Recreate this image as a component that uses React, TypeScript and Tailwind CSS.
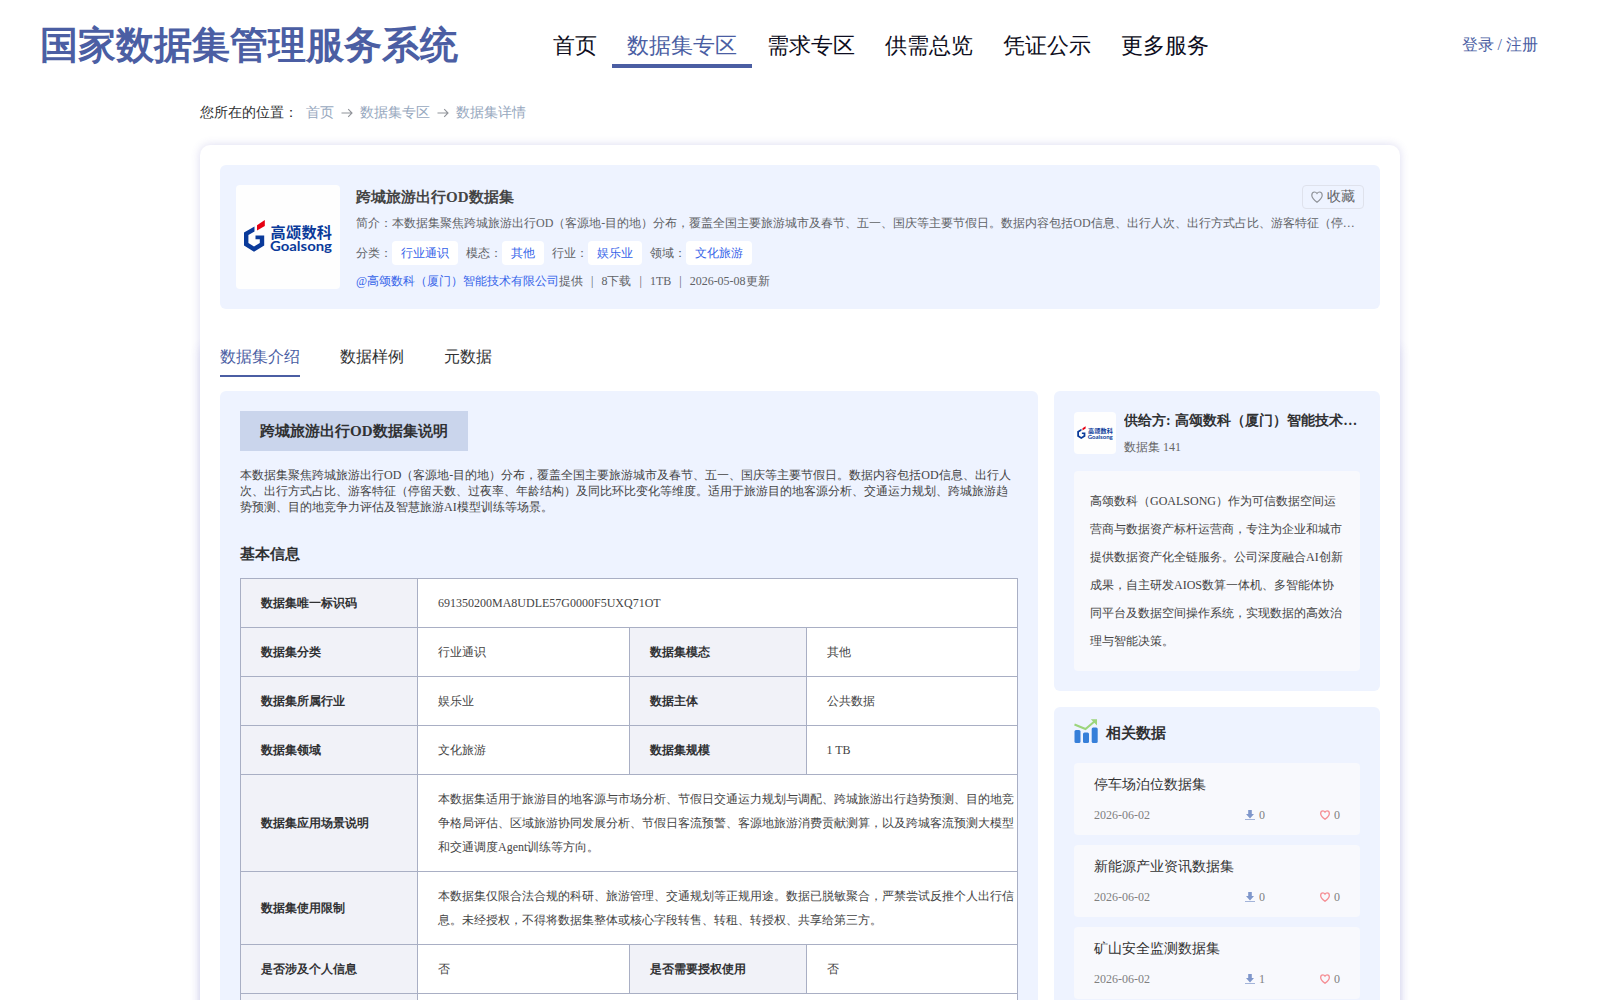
import React from 'react';

const navItems = ['首页', '数据集专区', '需求专区', '供需总览', '凭证公示', '更多服务'];

const summary =
  '本数据集聚焦跨城旅游出行OD（客源地-目的地）分布，覆盖全国主要旅游城市及春节、五一、国庆等主要节假日。数据内容包括OD信息、出行人次、出行方式占比、游客特征（停留天数、过夜率、年龄结构）及同比环比变化等维度。适用于旅游目的地客源分析、交通运力规划、跨城旅游趋势预测、目的地竞争力评估及智慧旅游AI模型训练等场景。';

const tags = [
  { label: '分类：', value: '行业通识' },
  { label: '模态：', value: '其他' },
  { label: '行业：', value: '娱乐业' },
  { label: '领域：', value: '文化旅游' },
];

const rows = [
  ['数据集唯一标识码', '691350200MA8UDLE57G0000F5UXQ71OT'],
  ['数据集分类', '行业通识', '数据集模态', '其他'],
  ['数据集所属行业', '娱乐业', '数据主体', '公共数据'],
  ['数据集领域', '文化旅游', '数据集规模', '1 TB'],
  [
    '数据集应用场景说明',
    '本数据集适用于旅游目的地客源与市场分析、节假日交通运力规划与调配、跨城旅游出行趋势预测、目的地竞争格局评估、区域旅游协同发展分析、节假日客流预警、客源地旅游消费贡献测算，以及跨城客流预测大模型和交通调度Agent训练等方向。',
  ],
  [
    '数据集使用限制',
    '本数据集仅限合法合规的科研、旅游管理、交通规划等正规用途。数据已脱敏聚合，严禁尝试反推个人出行信息。未经授权，不得将数据集整体或核心字段转售、转租、转授权、共享给第三方。',
  ],
  ['是否涉及个人信息', '否', '是否需要授权使用', '否'],
  ['', ''],
];

const related = [
  { title: '停车场泊位数据集', date: '2026-06-02', downloads: 0, likes: 0 },
  { title: '新能源产业资讯数据集', date: '2026-06-02', downloads: 0, likes: 0 },
  { title: '矿山安全监测数据集', date: '2026-06-02', downloads: 1, likes: 0 },
];

const Logo = ({ className }: { className: string }) => (
  <svg viewBox="0 0 104 104" className={className}>
    <rect width="104" height="104" fill="#fefefe" />
    <path d="M18.5 41.5 L8 47.5 V60.5 L18 66.8 L28.2 60.5 V50.5 H19.5 V54.3 H23.8 V58 L18 61.6 L12.4 58 V50 L18.5 46.4 Z" fill="#0a3a9a" />
    <path d="M21 40.2 L28.8 35 V41 L21 45.6 Z" fill="#e60012" />
    <text x="34.5" y="53" fontSize="15.2" fontWeight="700" textLength="61.5" fill="#0a3a9a" fontFamily="'Noto Sans CJK SC', sans-serif">高颂数科</text>
    <text x="34" y="65.8" fontSize="13.4" fontWeight="700" textLength="62" lengthAdjust="spacingAndGlyphs" fill="#0a3a9a" fontFamily="Lato, sans-serif">Goalsong</text>
  </svg>
);

const HeartIcon = ({ className }: { className: string }) => (
  <svg viewBox="0 0 12 12" className={className} fill="none" stroke="currentColor">
    <path d="M6 11.2 C3 9 0.8 7 0.8 4.2 C0.8 2.3 2 1 3.5 1 C4.6 1 5.4 1.6 6 2.5 C6.6 1.6 7.4 1 8.5 1 C10 1 11.2 2.3 11.2 4.2 C11.2 7 9 9 6 11.2 Z" />
  </svg>
);

const DownloadIcon = () => (
  <svg viewBox="0 0 10 10" className="w-2.5 h-2.5">
    <path d="M3.2 0 H6.8 V4 H9 L5 8.4 L1 4 H3.2 Z" fill="#7f97cb" />
    <rect y="9" width="10" height="1" fill="#a3b4d9" />
  </svg>
);

const ArrowIcon = () => (
  <svg viewBox="0 0 14 14" className="w-3.5 h-3.5 mx-1.5" fill="none" stroke="#909399" strokeWidth="1.1">
    <path d="M1.5 7 H12 M8.2 3.2 L12 7 L8.2 10.8" />
  </svg>
);

const ChartIcon = () => (
  <svg viewBox="0 0 24 24" className="w-6 h-6">
    <rect x="0.5" y="11" width="6" height="13" rx="1.5" fill="#367fd9" />
    <rect x="9" y="13.5" width="6" height="10.5" rx="1.5" fill="#367fd9" />
    <rect x="17.7" y="8.5" width="6" height="15.5" rx="1.5" fill="#367fd9" />
    <path d="M0.5 5.5 L11.5 10 L21 2" fill="none" stroke="#9cd57c" strokeWidth="2" />
    <path d="M16.8 0.3 H23 V6.5 Z" fill="#9cd57c" />
  </svg>
);

const Header = () => (
  <header className="flex items-center h-[90px] pl-10 pr-[62px] text-[#4b5ea3]">
    <h1 className="text-[38px] leading-[44px] font-bold w-[498px]">国家数据集管理服务系统</h1>
    <nav className="flex text-[22px] leading-[30px]">
      {navItems.map((item) => (
        <a
          key={item}
          className={
            item === '数据集专区'
              ? 'px-[15px] pt-2 pb-[3px] border-b-4 border-[#4b5ea3]'
              : 'px-[15px] pt-2 pb-[3px] border-b-4 border-transparent text-[#0d0d20]'
          }
        >
          {item}
        </a>
      ))}
    </nav>
    <a className="ml-auto text-base">登录 / 注册</a>
  </header>
);

const Summary = () => (
  <section className="flex h-36 rounded-md bg-[#eef3ff] px-4 py-5">
    <Logo className="w-[104px] h-[104px] rounded shrink-0" />
    <div className="ml-4 flex-1 min-w-0 text-xs text-[#606266]">
      <div className="flex justify-between h-6">
        <h2 className="text-[15px] leading-6 font-bold text-[#444]">跨城旅游出行OD数据集</h2>
        <button className="flex items-center gap-1 h-6 px-2 border border-[#dfe2ec] rounded text-sm leading-5">
          <HeartIcon className="w-3 h-3 stroke-[1.2] text-[#909399]" />
          收藏
        </button>
      </div>
      <p className="mt-1 h-5 leading-5 truncate pr-2">简介：{summary}</p>
      <div className="flex gap-2 mt-2 leading-6">
        {tags.map((tag) => (
          <div key={tag.label} className="flex">
            {tag.label}
            <span className="px-[9px] rounded bg-white text-[#3563e9]">{tag.value}</span>
          </div>
        ))}
      </div>
      <div className="flex gap-2 mt-2 leading-4">
        <span>
          <a className="text-[#3563e9]">@高颂数科（厦门）智能技术有限公司</a>提供
        </span>
        <span>|</span>
        <span>8下载</span>
        <span>|</span>
        <span>1TB</span>
        <span>|</span>
        <span>2026-05-08更新</span>
      </div>
    </div>
  </section>
);

const InfoTable = () => (
  <table className="w-[778px] table-fixed border-collapse text-xs leading-6 bg-white">
    <colgroup>
      <col className="w-[177px]" />
      <col className="w-[212px]" />
      <col className="w-[177px]" />
      <col />
    </colgroup>
    <tbody>
      {rows.map((row) => (
        <tr key={row[0]}>
          {row.map((cell, i) =>
            i % 2 === 0 ? (
              <th key={i} className="h-[49px] border border-[#a9afc4] bg-[#f1f2f8] pl-5 py-3 text-left font-bold text-[#303133]">
                {cell}
              </th>
            ) : (
              <td key={i} colSpan={row.length === 2 ? 3 : 1} className="border border-[#a9afc4] pl-5 py-3 text-[#444] nth-4:pl-[19.5px]">
                {cell}
              </td>
            )
          )}
        </tr>
      ))}
    </tbody>
  </table>
);

const Provider = () => (
  <section className="h-[300px] rounded-md bg-[#eef3ff] px-5 pt-5">
    <div className="flex">
      <Logo className="w-[42px] h-[42px] mt-[1px] rounded shrink-0" />
      <div className="ml-2 min-w-0">
        <h3 className="text-sm leading-5 font-bold truncate text-[#303133]">
          <span className="mr-px">供给方:</span> 高颂数科（厦门）智能技术有限公司
        </h3>
        <p className="mt-2 text-xs leading-4 text-[#666]">数据集 141</p>
      </div>
    </div>
    <p className="mt-4 h-[200px] rounded bg-[#f8f9fd] p-4 text-xs leading-7 text-[#444]">
      高颂数科（GOALSONG）作为可信数据空间运营商与数据资产标杆运营商，专注为企业和城市提供数据资产化全链服务。公司深度融合AI创新成果，自主研发AIOS数算一体机、多智能体协同平台及数据空间操作系统，实现数据的高效治理与智能决策。
    </p>
  </section>
);

const Related = () => (
  <section className="mt-4 rounded-md bg-[#eef3ff] px-5 pt-3 pb-5">
    <div className="flex h-6">
      <ChartIcon />
      <h3 className="ml-2 mt-0.5 text-[15px] leading-6 font-bold text-[#303133]">相关数据</h3>
    </div>
    <div className="flex flex-col gap-2.5 mt-5">
      {related.map((item) => (
        <div key={item.title} className="h-[72px] rounded bg-[#f8f9fd] px-5 pt-3">
          <h4 className="text-sm leading-5 text-[#333]">{item.title}</h4>
          <div className="flex items-center mt-3 text-xs leading-4 text-[#808080]">
            <span className="w-[151px]">{item.date}</span>
            <span className="flex items-center gap-1 w-[75px]">
              <DownloadIcon />
              {item.downloads}
            </span>
            <span className="flex items-center gap-1">
              <HeartIcon className="w-2.5 h-2.5 stroke-[1.6] text-[#f58f95]" />
              {item.likes}
            </span>
          </div>
        </div>
      ))}
    </div>
  </section>
);

const App = () => {
  return (
    <div className="h-[1000px] overflow-hidden bg-white font-['Liberation_Serif',serif]">
      <Header />
      <main className="w-[1200px] mx-auto">
        <div className="flex items-center h-11 pt-0.5 text-sm text-[#97a8be]">
          <span className="mr-2 text-[#303133]">您所在的位置：</span>
          首页
          <ArrowIcon />
          数据集专区
          <ArrowIcon />
          数据集详情
        </div>
        <div className="mt-[11px] h-[1100px] rounded-[10px] pt-5 shadow-[0_0_10px_rgba(75,70,180,0.2)]">
          <div className="px-5">
            <Summary />
          </div>
          <div className="mt-7 h-[900px] px-5 pt-1 bg-white shadow-[0_10px_10px_rgba(75,70,180,0.12)]">
            <div className="flex gap-10 h-9 text-base leading-8 text-[#303133]">
              <a className="h-9 border-b-2 border-[#4b5ea3] text-[#4b5ea3]">数据集介绍</a>
              <a>数据样例</a>
              <a>元数据</a>
            </div>
            <div className="flex gap-4 mt-[14px]">
              <section className="w-[818px] rounded-md bg-[#eef3ff] p-5">
                <h3 className="w-fit h-10 px-5 bg-[#cad5ec] text-[15px] leading-10 font-bold text-[#303133]">
                  跨城旅游出行OD数据集说明
                </h3>
                <p className="mt-4 text-xs leading-4 text-[#444]">{summary}</p>
                <h3 className="mt-[27px] mb-3 text-[15px] leading-6 font-bold text-[#303133]">基本信息</h3>
                <InfoTable />
              </section>
              <aside className="w-[326px]">
                <Provider />
                <Related />
              </aside>
            </div>
          </div>
        </div>
      </main>
    </div>
  );
};

export default App;
